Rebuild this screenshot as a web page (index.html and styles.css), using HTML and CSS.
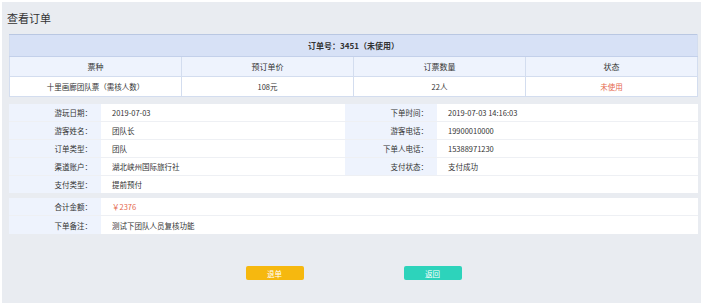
FILE: index.html
```html
<!DOCTYPE html>
<html lang="zh-CN">
<head>
    <meta charset="UTF-8">
    <title>查看订单</title>
    <link rel="stylesheet" href="styles.css">
</head>
<body>
    <div class="page">
        <h1 class="title">查看订单</h1>

        <table class="order-table">
            <tr>
                <th class="order-no" colspan="4">订单号：3451（未使用）</th>
            </tr>
            <tr class="col-head">
                <td>票种</td>
                <td>预订单价</td>
                <td>订票数量</td>
                <td>状态</td>
            </tr>
            <tr>
                <td>十里画廊团队票（需核人数）</td>
                <td>108元</td>
                <td>22人</td>
                <td class="red">未使用</td>
            </tr>
        </table>

        <div class="info">
            <div class="row">
                <div class="label">游玩日期：</div>
                <div class="value">2019-07-03</div>
                <div class="label">下单时间：</div>
                <div class="value">2019-07-03 14:16:03</div>
            </div>
            <div class="row">
                <div class="label">游客姓名：</div>
                <div class="value">团队长</div>
                <div class="label">游客电话：</div>
                <div class="value">19900010000</div>
            </div>
            <div class="row">
                <div class="label">订单类型：</div>
                <div class="value">团队</div>
                <div class="label">下单人电话：</div>
                <div class="value">15388971230</div>
            </div>
            <div class="row">
                <div class="label">渠道账户：</div>
                <div class="value">湖北峡州国际旅行社</div>
                <div class="label">支付状态：</div>
                <div class="value">支付成功</div>
            </div>
            <div class="row last">
                <div class="label">支付类型：</div>
                <div class="value">提前预付</div>
                <div class="value wide"></div>
            </div>
        </div>

        <div class="info info-total">
            <div class="row">
                <div class="label">合计金额：</div>
                <div class="value red">￥2376</div>
            </div>
            <div class="row last">
                <div class="label">下单备注：</div>
                <div class="value">测试下团队人员复核功能</div>
            </div>
        </div>

        <div class="actions">
            <button class="btn btn-yellow">退单</button>
            <button class="btn btn-green">返回</button>
        </div>
    </div>
</body>
</html>
```

FILE: styles.css
```css
body {
    margin: 0;
    background-color: #fff;
    font-family: 'Noto Sans CJK SC', 'Noto Sans', sans-serif;
    color: #333;
}

.page {
    margin: 2px 1px 0 2px;
    height: 301px;
    padding: 0 3px 0 7px;
    background-color: #e9ecf1;
    box-sizing: border-box;
}

.title {
    margin: 0 0 0 -2px;
    height: 32px;
    line-height: 32px;
    font-size: 11px;
    font-weight: normal;
    color: #333;
}

.order-table {
    width: 100%;
    border-collapse: collapse;
    table-layout: fixed;
    font-size: 7.5px;
    background-color: #fff;
}

.order-table th,
.order-table td {
    height: 19px;
    padding: 0;
    text-align: center;
    border: 1px solid #d3ddef;
    border-top: none;
}

.order-table .order-no {
    height: 21px;
    background-color: #d7e1f6;
    border-top: 1px solid #b9c7e2;
    border-bottom: 1px solid #c3d0ea;
    font-weight: bold;
    font-size: 8px;
}

.col-head td {
    background-color: #eef3fd;
    font-size: 8px;
}

.red {
    color: #e5694e;
}

.info {
    margin-top: 7px;
    font-size: 7.5px;
}

.info-total {
    margin-top: 5px;
}

.row {
    display: grid;
    grid-template-columns: 92px 244px 92px 1fr;
    height: 18px;
    border-bottom: 1px solid #eef0f4;
    box-sizing: border-box;
}

.row.last {
    height: 17px;
    border-bottom: none;
}

.info-total .row {
    grid-template-columns: 92px 1fr;
}

.info-total .row.last {
    height: 18px;
}

.label,
.value {
    display: flex;
    align-items: center;
}

.label {
    justify-content: flex-end;
    padding-right: 9px;
    background-color: #eef3fd;
}

.value {
    padding-left: 11px;
    background-color: #fff;
}

.value.wide {
    grid-column: span 2;
}

.actions {
    display: flex;
    justify-content: center;
    gap: 100px;
    margin-top: 32px;
}

.btn {
    width: 58px;
    height: 14px;
    padding: 0;
    border: none;
    border-radius: 2px;
    color: #fff;
    font-family: 'Noto Sans CJK SC', sans-serif;
    font-size: 7.5px;
    cursor: pointer;
}

.btn-yellow {
    background-color: #f6b80f;
}

.btn-green {
    background-color: #2dd3bb;
}
```
